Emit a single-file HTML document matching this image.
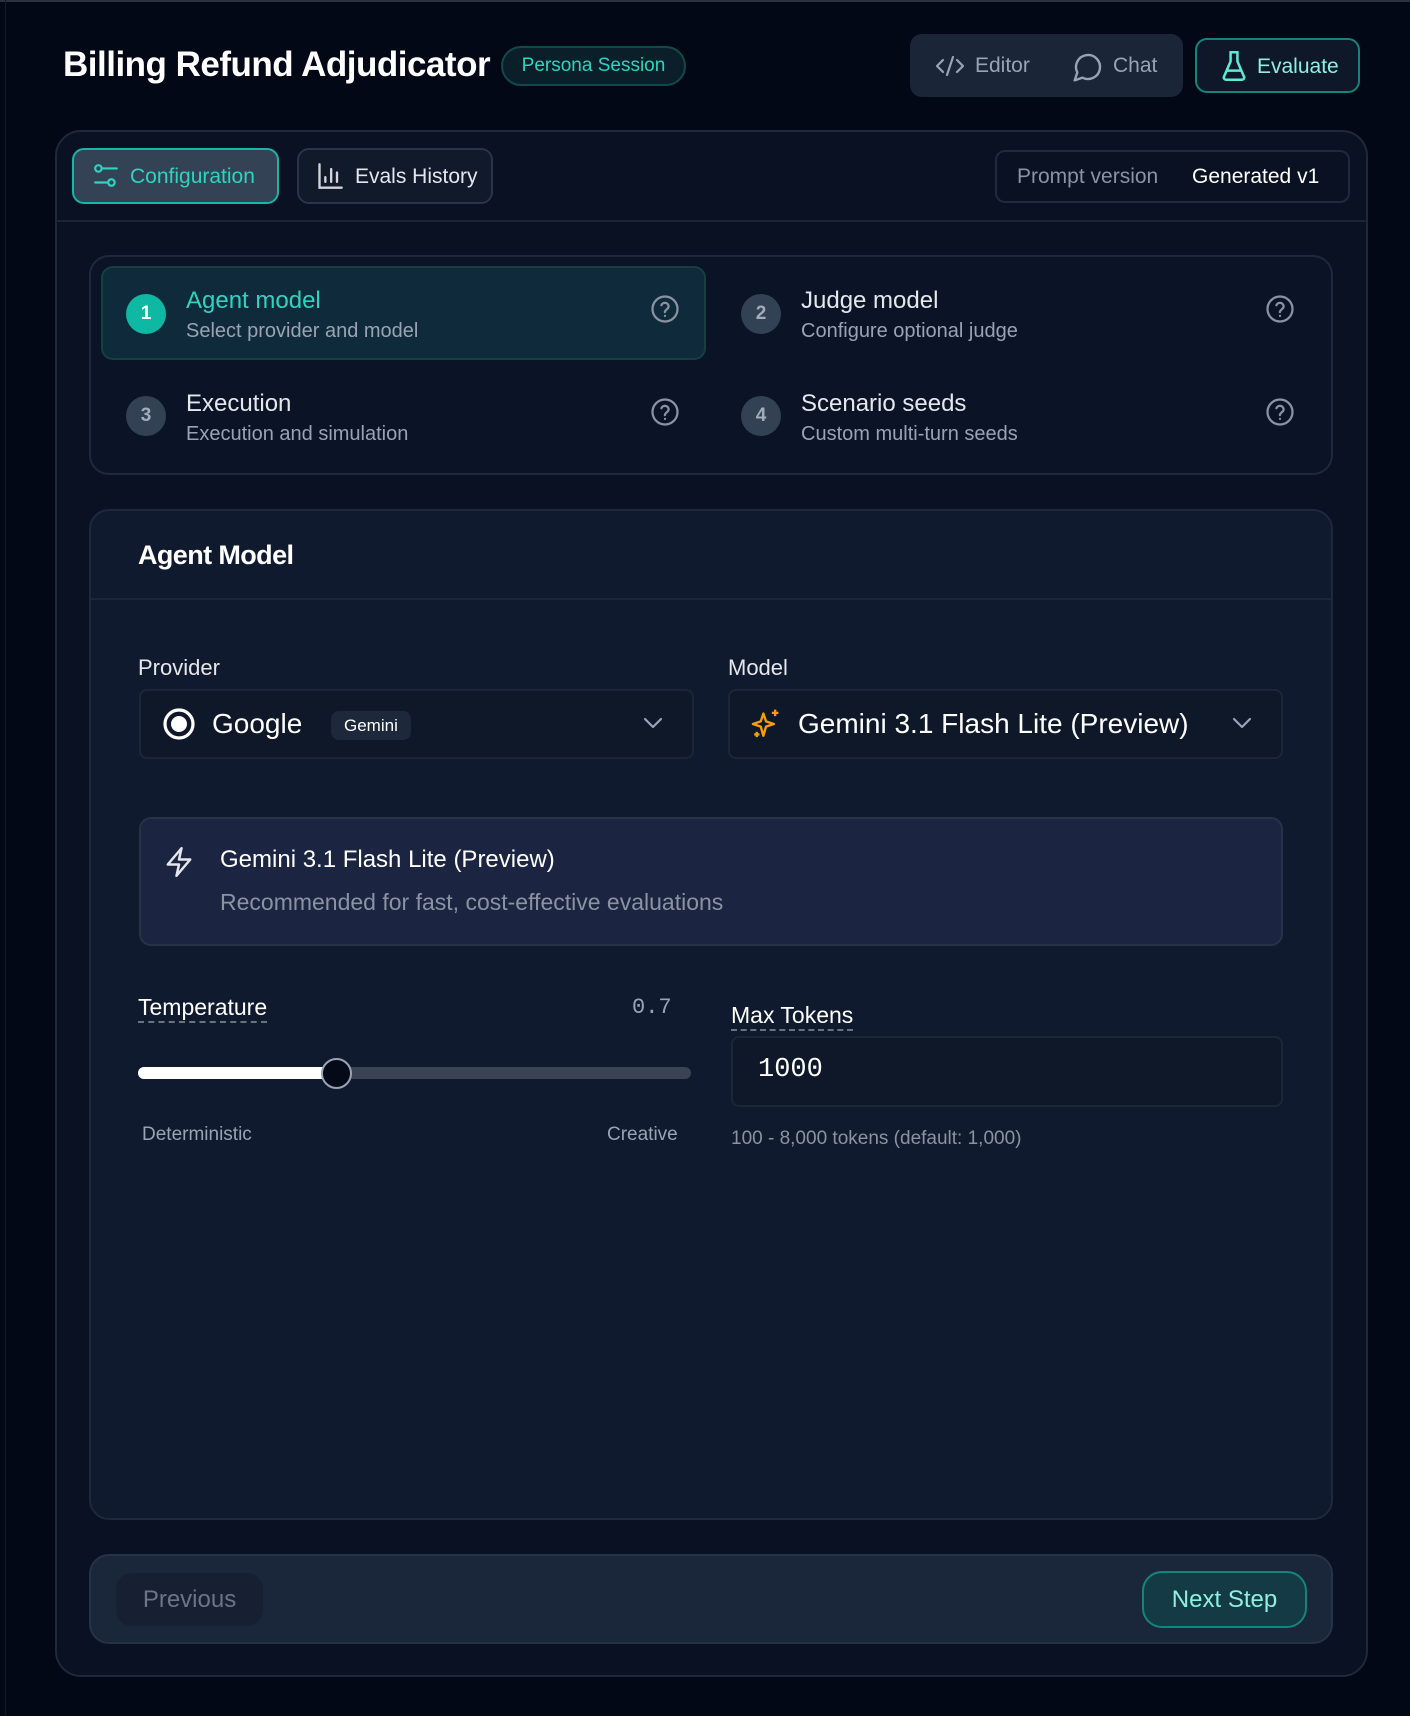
<!DOCTYPE html>
<html><head><meta charset="utf-8"><style>
*{box-sizing:border-box;margin:0;padding:0}
body{width:1410px;height:1716px;background:#030816;font-family:"Liberation Sans",sans-serif;position:relative;overflow:hidden;color:#e5e7eb}
.a{position:absolute}
.t{white-space:nowrap}
svg{display:block}
</style></head><body>
<div class="a" style="left:0;top:0;width:1410px;height:2px;background:#2a3140"></div>
<div class="a" style="left:5px;top:0;width:1px;height:1716px;background:#141b2b"></div>

<div class="a t" style="left:63px;top:45px;font-size:35px;font-weight:bold;color:#fff;letter-spacing:-0.5px">Billing Refund Adjudicator</div>
<div class="a t" style="left:501px;top:46px;width:185px;height:40px;border:2px solid #124a4a;background:#0a1f2a;border-radius:20px;color:#2dd4bf;font-size:19px;line-height:36px;text-align:center">Persona Session</div>

<div class="a" style="left:910px;top:34px;width:273px;height:63px;background:#1a2538;border-radius:12px"></div>
<svg class="a" style="left:935px;top:54px" width="30" height="24" viewBox="0 0 30 24" fill="none" stroke="#9aa3b5" stroke-width="2.2" stroke-linecap="round" stroke-linejoin="round"><path d="M8 6 2 12l6 6M22 6l6 6-6 6M18 3l-6 18"/></svg>
<div class="a t" style="left:975px;top:54px;font-size:21px;color:#9aa3b5">Editor</div>
<svg class="a" style="left:1072px;top:51px" width="32" height="32" viewBox="0 0 24 24" fill="none" stroke="#9aa3b5" stroke-width="1.8" stroke-linejoin="round"><path d="M7.9 20A9 9 0 1 0 4 16.1L2 22z"/></svg>
<div class="a t" style="left:1113px;top:54px;font-size:21px;color:#9aa3b5">Chat</div>

<div class="a" style="left:1195px;top:38px;width:165px;height:55px;border:2px solid #14857a;background:#0e1829;border-radius:12px"></div>
<svg class="a" style="left:1220px;top:50px" width="28" height="32" viewBox="0 0 24 28" fill="none" stroke="#5eead4" stroke-width="2.2" stroke-linejoin="round"><path d="M8 2h8M9 2v8L3 24a2 2 0 0 0 2 2h14a2 2 0 0 0 2-2L15 10V2M6 18h12"/></svg>
<div class="a t" style="left:1257px;top:55px;font-size:21px;color:#8ff0e0">Evaluate</div>

<div class="a" style="left:55px;top:130px;width:1313px;height:1547px;background:#0a1122;border:2px solid #1e293b;border-radius:26px"></div>
<div class="a" style="left:56px;top:220px;width:1311px;height:2px;background:#1c2536"></div>

<div class="a" style="left:72px;top:148px;width:207px;height:56px;border:2px solid #14b8a6;background:#344256;border-radius:12px"></div>
<svg class="a" style="left:93px;top:163px" width="26" height="26" viewBox="0 0 24 24" fill="none" stroke="#2dd4bf" stroke-width="2" stroke-linecap="round"><circle cx="5" cy="5" r="3"/><circle cx="17" cy="18" r="3"/><path d="M8 5h14M2 18h12"/></svg>
<div class="a t" style="left:130px;top:165px;font-size:21px;color:#2dd4bf">Configuration</div>
<div class="a" style="left:297px;top:148px;width:196px;height:56px;border:2px solid #2a3547;background:#111a2b;border-radius:12px"></div>
<svg class="a" style="left:316px;top:162px" width="28" height="28" viewBox="0 0 24 24" fill="none" stroke="#d1d5db" stroke-width="2" stroke-linecap="round"><path d="M3 2v20h19M8 17v-4M13 17V6M18 17v-8"/></svg>
<div class="a t" style="left:355px;top:165px;font-size:21px;color:#e2e8f0">Evals History</div>

<div class="a" style="left:995px;top:150px;width:355px;height:53px;border:2px solid #1f2a3c;border-radius:10px"></div>
<div class="a t" style="left:1017px;top:165px;font-size:21px;color:#8b93a3">Prompt version</div>
<div class="a t" style="left:1192px;top:165px;font-size:21px;color:#fff">Generated v1</div>

<div class="a" style="left:89px;top:255px;width:1244px;height:220px;border:2px solid #1e293b;background:#0b1426;border-radius:20px"></div>
<div class="a" style="left:101px;top:266px;width:605px;height:94px;border:2px solid #15403f;background:#0f2a3a;border-radius:12px"></div>

<div class="a" style="left:126px;top:294px;width:40px;height:40px;border-radius:50%;background:#0fb8a2;color:#fff;font-size:19px;font-weight:bold;line-height:40px;text-align:center">1</div>
<div class="a t" style="left:186px;top:287px;font-size:24px;color:#2dd4bf">Agent model</div>
<div class="a t" style="left:186px;top:320px;font-size:20px;color:#9aa3b5">Select provider and model</div>

<div class="a" style="left:741px;top:294px;width:40px;height:40px;border-radius:50%;background:#334155;color:#a3acbd;font-size:19px;font-weight:bold;line-height:40px;text-align:center">2</div>
<div class="a t" style="left:801px;top:287px;font-size:24px;color:#e5e7eb">Judge model</div>
<div class="a t" style="left:801px;top:320px;font-size:20px;color:#9aa3b5">Configure optional judge</div>

<div class="a" style="left:126px;top:396px;width:40px;height:40px;border-radius:50%;background:#334155;color:#a3acbd;font-size:19px;font-weight:bold;line-height:40px;text-align:center">3</div>
<div class="a t" style="left:186px;top:390px;font-size:24px;color:#e5e7eb">Execution</div>
<div class="a t" style="left:186px;top:423px;font-size:20px;color:#9aa3b5">Execution and simulation</div>

<div class="a" style="left:741px;top:396px;width:40px;height:40px;border-radius:50%;background:#334155;color:#a3acbd;font-size:19px;font-weight:bold;line-height:40px;text-align:center">4</div>
<div class="a t" style="left:801px;top:390px;font-size:24px;color:#e5e7eb">Scenario seeds</div>
<div class="a t" style="left:801px;top:423px;font-size:20px;color:#9aa3b5">Custom multi-turn seeds</div>

<svg class="a" style="left:650px;top:294px" width="30" height="30" viewBox="0 0 24 24" fill="none" stroke="#8b93a3" stroke-width="1.8" stroke-linecap="round"><circle cx="12" cy="12" r="10"/><path d="M9.1 9a3 3 0 0 1 5.8 1c0 2-3 2.5-3 4.5M12 17.5h.01"/></svg>
<svg class="a" style="left:1265px;top:294px" width="30" height="30" viewBox="0 0 24 24" fill="none" stroke="#8b93a3" stroke-width="1.8" stroke-linecap="round"><circle cx="12" cy="12" r="10"/><path d="M9.1 9a3 3 0 0 1 5.8 1c0 2-3 2.5-3 4.5M12 17.5h.01"/></svg>
<svg class="a" style="left:650px;top:397px" width="30" height="30" viewBox="0 0 24 24" fill="none" stroke="#8b93a3" stroke-width="1.8" stroke-linecap="round"><circle cx="12" cy="12" r="10"/><path d="M9.1 9a3 3 0 0 1 5.8 1c0 2-3 2.5-3 4.5M12 17.5h.01"/></svg>
<svg class="a" style="left:1265px;top:397px" width="30" height="30" viewBox="0 0 24 24" fill="none" stroke="#8b93a3" stroke-width="1.8" stroke-linecap="round"><circle cx="12" cy="12" r="10"/><path d="M9.1 9a3 3 0 0 1 5.8 1c0 2-3 2.5-3 4.5M12 17.5h.01"/></svg>

<div class="a" style="left:89px;top:509px;width:1244px;height:1011px;border:2px solid #1e293b;background:#101a2e;border-radius:20px"></div>
<div class="a" style="left:90px;top:598px;width:1242px;height:2px;background:#1c2638"></div>
<div class="a t" style="left:138px;top:540px;font-size:27px;font-weight:bold;color:#fff;letter-spacing:-0.6px">Agent Model</div>

<div class="a t" style="left:138px;top:655px;font-size:22px;color:#e5e7eb">Provider</div>
<div class="a" style="left:139px;top:689px;width:555px;height:70px;border:2px solid #1c2638;background:#0f1829;border-radius:8px"></div>
<svg class="a" style="left:162px;top:707px" width="34" height="34" viewBox="0 0 34 34"><circle cx="17" cy="17" r="14" fill="none" stroke="#fff" stroke-width="3.2"/><circle cx="17" cy="17" r="8" fill="#fff"/></svg>
<div class="a t" style="left:212px;top:708px;font-size:28px;color:#fff">Google</div>
<div class="a t" style="left:331px;top:711px;height:29px;padding:0 13px;background:#1d283b;border-radius:8px;font-size:17px;line-height:29px;color:#fff">Gemini</div>
<svg class="a" style="left:642px;top:715px" width="22" height="16" viewBox="0 0 22 16" fill="none" stroke="#9aa3b5" stroke-width="2.2" stroke-linecap="round" stroke-linejoin="round"><path d="M3 4l8 8 8-8"/></svg>

<div class="a t" style="left:728px;top:655px;font-size:22px;color:#e5e7eb">Model</div>
<div class="a" style="left:728px;top:689px;width:555px;height:70px;border:2px solid #1c2638;background:#0f1829;border-radius:8px"></div>
<svg class="a" style="left:750px;top:707px" width="32" height="34" viewBox="0 0 24 26" fill="none" stroke="#f59e0b" stroke-width="1.8" stroke-linejoin="round"><path d="M10 5l2 6 6 2-6 2-2 7-2-7-6-2 6-2z"/><path d="M19 2v5M16.5 4.5h5M5 19v4M3 21h4"/></svg>
<div class="a t" style="left:798px;top:708px;font-size:28px;color:#fff">Gemini 3.1 Flash Lite (Preview)</div>
<svg class="a" style="left:1231px;top:715px" width="22" height="16" viewBox="0 0 22 16" fill="none" stroke="#9aa3b5" stroke-width="2.2" stroke-linecap="round" stroke-linejoin="round"><path d="M3 4l8 8 8-8"/></svg>

<div class="a" style="left:139px;top:817px;width:1144px;height:129px;border:2px solid #273247;background:#1b2440;border-radius:12px"></div>
<svg class="a" style="left:164px;top:845px" width="30" height="34" viewBox="0 0 24 26" fill="none" stroke="#e5e7eb" stroke-width="2" stroke-linejoin="round"><path d="M14 2 3 15h9l-2 9 11-13h-9z"/></svg>
<div class="a t" style="left:220px;top:846px;font-size:24px;color:#fff">Gemini 3.1 Flash Lite (Preview)</div>
<div class="a t" style="left:220px;top:889px;font-size:23px;color:#8b93a3">Recommended for fast, cost-effective evaluations</div>

<div class="a t" style="left:138px;top:994px;font-size:23px;color:#fff;border-bottom:2px dashed #6b7280;line-height:27px">Temperature</div>
<div class="a t" style="left:632px;top:995px;font-size:22px;color:#9aa3b5;font-family:'Liberation Mono',monospace">0.7</div>
<div class="a" style="left:138px;top:1067px;width:553px;height:12px;background:#3a4353;border-radius:6px"></div>
<div class="a" style="left:138px;top:1067px;width:200px;height:12px;background:#fff;border-radius:6px"></div>
<div class="a" style="left:321px;top:1058px;width:31px;height:31px;border-radius:50%;background:#050a18;border:2px solid #9aa3b5"></div>
<div class="a t" style="left:142px;top:1124px;font-size:19px;color:#9aa3b5">Deterministic</div>
<div class="a t" style="left:607px;top:1124px;font-size:19px;color:#9aa3b5">Creative</div>

<div class="a t" style="left:731px;top:1002px;font-size:23px;color:#fff;border-bottom:2px dashed #6b7280;line-height:27px">Max Tokens</div>
<div class="a" style="left:731px;top:1036px;width:552px;height:71px;border:2px solid #1c2638;background:#0f1829;border-radius:8px"></div>
<div class="a t" style="left:758px;top:1055px;font-size:27px;color:#fff;font-family:'Liberation Mono',monospace">1000</div>
<div class="a t" style="left:731px;top:1128px;font-size:19px;color:#8b93a3">100 - 8,000 tokens (default: 1,000)</div>

<div class="a" style="left:89px;top:1554px;width:1244px;height:90px;border:2px solid #26324a;background:#1a2639;border-radius:20px"></div>
<div class="a t" style="left:116px;top:1573px;width:147px;height:53px;background:#162032;border-radius:16px;font-size:24px;line-height:53px;text-align:center;color:#6b7488">Previous</div>
<div class="a t" style="left:1142px;top:1571px;width:165px;height:57px;border:2px solid #14857a;background:#133a45;border-radius:20px;font-size:24px;line-height:53px;text-align:center;color:#8ff0e0">Next Step</div>
</body></html>
